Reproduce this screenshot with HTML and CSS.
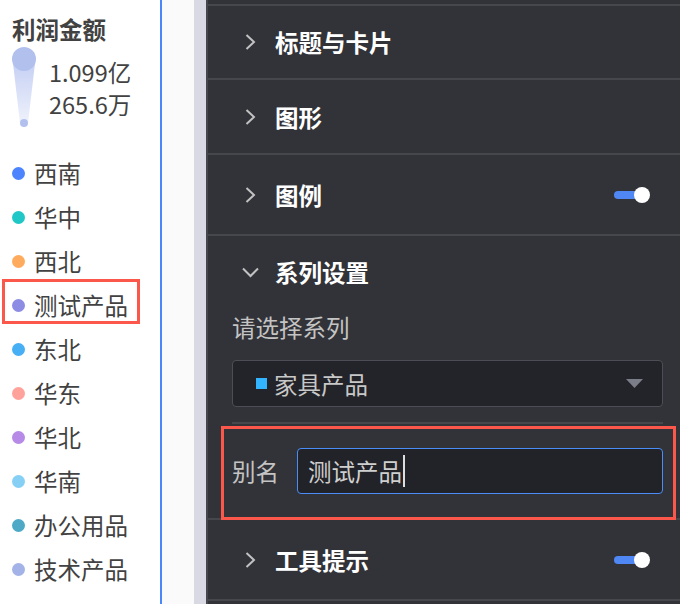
FILE: index.html
```html
<!DOCTYPE html>
<html lang="zh-CN">
<head>
<meta charset="utf-8">
<title>系列设置</title>
<link rel="stylesheet" href="styles.css">
</head>
<body>
<div class="app">
  <aside class="legend-panel">
    <div class="lp-title">利润金额</div>
    <div class="size-legend">
      <svg class="size-shape" width="24" height="84" viewBox="0 0 24 84">
        <defs>
          <linearGradient id="taper" x1="0" y1="0" x2="0" y2="1">
            <stop offset="0" stop-color="#c3cef3"/>
            <stop offset="1" stop-color="#eff2fc"/>
          </linearGradient>
        </defs>
        <path d="M0.5 13 L23.5 13 L16 77 L8 77 Z" fill="url(#taper)"/>
        <circle cx="12" cy="13" r="12" fill="#b2c0ee"/>
        <circle cx="12" cy="77" r="4" fill="#b2c0ee"/>
      </svg>
      <div class="size-values">
        <div>1.099亿</div>
        <div>265.6万</div>
      </div>
    </div>
    <ul class="legend">
      <li><span class="dot c-xn"></span>西南</li>
      <li><span class="dot c-hz"></span>华中</li>
      <li><span class="dot c-xb"></span>西北</li>
      <li class="hl"><span class="dot c-cs"></span>测试产品</li>
      <li><span class="dot c-db"></span>东北</li>
      <li><span class="dot c-hd"></span>华东</li>
      <li><span class="dot c-hb"></span>华北</li>
      <li><span class="dot c-hn"></span>华南</li>
      <li><span class="dot c-bg"></span>办公用品</li>
      <li><span class="dot c-js"></span>技术产品</li>
    </ul>
  </aside>
  <div class="gutter"></div>
  <div class="scrollbar"></div>
  <main class="panel">
    <div class="panel-top"></div>

    <section class="section">
      <div class="sec-head h72">
        <span class="chev"><svg width="11" height="16" viewBox="0 0 11 16"><polyline points="1.5,1 9,8 1.5,15" fill="none" stroke="#c2c2c2" stroke-width="2"/></svg></span>
        <span class="sec-title">标题与卡片</span>
      </div>
    </section>

    <section class="section">
      <div class="sec-head h73">
        <span class="chev"><svg width="11" height="16" viewBox="0 0 11 16"><polyline points="1.5,1 9,8 1.5,15" fill="none" stroke="#c2c2c2" stroke-width="2"/></svg></span>
        <span class="sec-title">图形</span>
      </div>
    </section>

    <section class="section">
      <div class="sec-head h79">
        <span class="chev"><svg width="11" height="16" viewBox="0 0 11 16"><polyline points="1.5,1 9,8 1.5,15" fill="none" stroke="#c2c2c2" stroke-width="2"/></svg></span>
        <span class="sec-title">图例</span>
        <span class="toggle"></span>
      </div>
    </section>

    <section class="section">
      <div class="sec-head h72">
        <span class="chev"><svg width="17" height="11" viewBox="0 0 17 11"><polyline points="1,1.5 8.5,9 16,1.5" fill="none" stroke="#c2c2c2" stroke-width="2"/></svg></span>
        <span class="sec-title">系列设置</span>
      </div>
      <div class="sec-body">
        <div class="field-label">请选择系列</div>
        <div class="select">
          <span class="swatch"></span>
          <span class="select-text">家具产品</span>
          <svg class="caret" width="17" height="9" viewBox="0 0 17 9"><polygon points="0,0 17,0 8.5,9" fill="#7b7d89"/></svg>
        </div>
        <div class="divider"></div>
        <div class="alias-row">
          <span class="alias-label">别名</span>
          <div class="input"><span class="input-text">测试产品</span><span class="cursor"></span></div>
        </div>
      </div>
    </section>

    <section class="section">
      <div class="sec-head h79">
        <span class="chev"><svg width="11" height="16" viewBox="0 0 11 16"><polyline points="1.5,1 9,8 1.5,15" fill="none" stroke="#c2c2c2" stroke-width="2"/></svg></span>
        <span class="sec-title">工具提示</span>
        <span class="toggle"></span>
      </div>
    </section>
  </main>
</div>
</body>
</html>
```

FILE: styles.css
```css
*, *::before, *::after {
  box-sizing: border-box;
  margin: 0;
  padding: 0;
}

html, body {
  width: 680px;
  height: 604px;
  overflow: hidden;
}

body {
  font-family: "Noto Sans CJK SC", "Noto Sans", sans-serif;
  font-size: 23.5px;
}

.app {
  display: flex;
  height: 604px;
}

/* ---------- left legend ---------- */
.legend-panel {
  width: 162px;
  flex: none;
  background: #fff;
  border-right: 2px solid #4a87f8;
  padding-left: 12px;
  color: #424242;
}

.lp-title {
  font-weight: 700;
  padding-top: 13px;
  line-height: 32px;
  height: 45px;
}

.size-legend {
  display: flex;
  height: 106px;
}

.size-shape {
  display: block;
  margin-top: 1px;
  flex: none;
}

.size-values {
  margin-left: 13px;
  padding-top: 11px;
  line-height: 32px;
}

.legend {
  list-style: none;
}

.legend li {
  height: 44px;
  display: flex;
  align-items: center;
  gap: 9px;
  position: relative;
}

.dot {
  width: 13px;
  height: 13px;
  border-radius: 50%;
  flex: none;
}

.c-xn { background: #4c84ff; }
.c-hz { background: #1fc8c6; }
.c-xb { background: #ffab5e; }
.c-cs { background: #8c8ce4; }
.c-db { background: #47aff4; }
.c-hd { background: #ffa29b; }
.c-hb { background: #b68ae6; }
.c-hn { background: #86d0f6; }
.c-bg { background: #4da9c6; }
.c-js { background: #a3b3e8; }

.legend li.hl::after {
  content: "";
  position: absolute;
  left: -10px;
  top: -4px;
  width: 138px;
  height: 45px;
  border: 3px solid #fb574a;
}

/* ---------- gutter ---------- */
.gutter {
  width: 32px;
  flex: none;
  background: #fafafa;
}

.scrollbar {
  width: 12px;
  flex: none;
  background: #d9d9e4;
}

/* ---------- dark panel ---------- */
.panel {
  flex: 1;
  background: #323338;
  border-left: 2px solid #46474d;
}

.panel-top {
  height: 6px;
  border-bottom: 2px solid #46474d;
}

.section {
  border-bottom: 2px solid #46474d;
}

.sec-head {
  display: flex;
  align-items: center;
  padding: 0 30px 0 32px;
  color: #fff;
  font-weight: 700;
}

.h72 { height: 72px; }
.h73 { height: 73px; }
.h79 { height: 79px; }

.chev {
  width: 20px;
  display: flex;
  justify-content: center;
  align-items: center;
}

.chev svg {
  display: block;
}

.sec-title {
  margin-left: 15px;
  flex: 1;
}

.toggle {
  width: 36px;
  height: 16px;
  position: relative;
  flex: none;
}

.toggle::before {
  content: "";
  position: absolute;
  left: 0;
  top: 4px;
  width: 28px;
  height: 8px;
  border-radius: 4px;
  background: #4f87f5;
}

.toggle::after {
  content: "";
  position: absolute;
  right: 0;
  top: 0;
  width: 16px;
  height: 16px;
  border-radius: 50%;
  background: #fff;
}

.sec-body {
  padding: 3px 17px 0 24px;
  color: #c4c4c4;
}

.field-label {
  line-height: 32px;
}

.select {
  margin-top: 17px;
  height: 47px;
  border: 1.5px solid #4d4e55;
  border-radius: 4px;
  background: #232429;
  display: flex;
  align-items: center;
  padding: 0 19px 0 23px;
}

.swatch {
  width: 11px;
  height: 11px;
  background: #33b4ff;
  flex: none;
}

.select-text {
  margin-left: 7px;
  flex: 1;
  color: #c8c8c8;
}

.caret {
  display: block;
  flex: none;
}

.divider {
  margin-top: 15px;
  height: 2px;
  background: #46474d;
}

.alias-row {
  height: 94px;
  display: flex;
  align-items: center;
  position: relative;
}

.alias-row::after {
  content: "";
  position: absolute;
  left: -11px;
  right: -13px;
  top: 2px;
  bottom: -2px;
  border: 3px solid #fb574a;
}

.alias-label {
  width: 65px;
  flex: none;
}

.input {
  flex: 1;
  height: 46px;
  border: 1.5px solid #4a8df8;
  border-radius: 4px;
  background: #222328;
  display: flex;
  align-items: center;
  padding-left: 10px;
  color: #cfcfcf;
}

.cursor {
  width: 1.5px;
  height: 32px;
  background: #dddddd;
  margin-left: 1px;
}
```
